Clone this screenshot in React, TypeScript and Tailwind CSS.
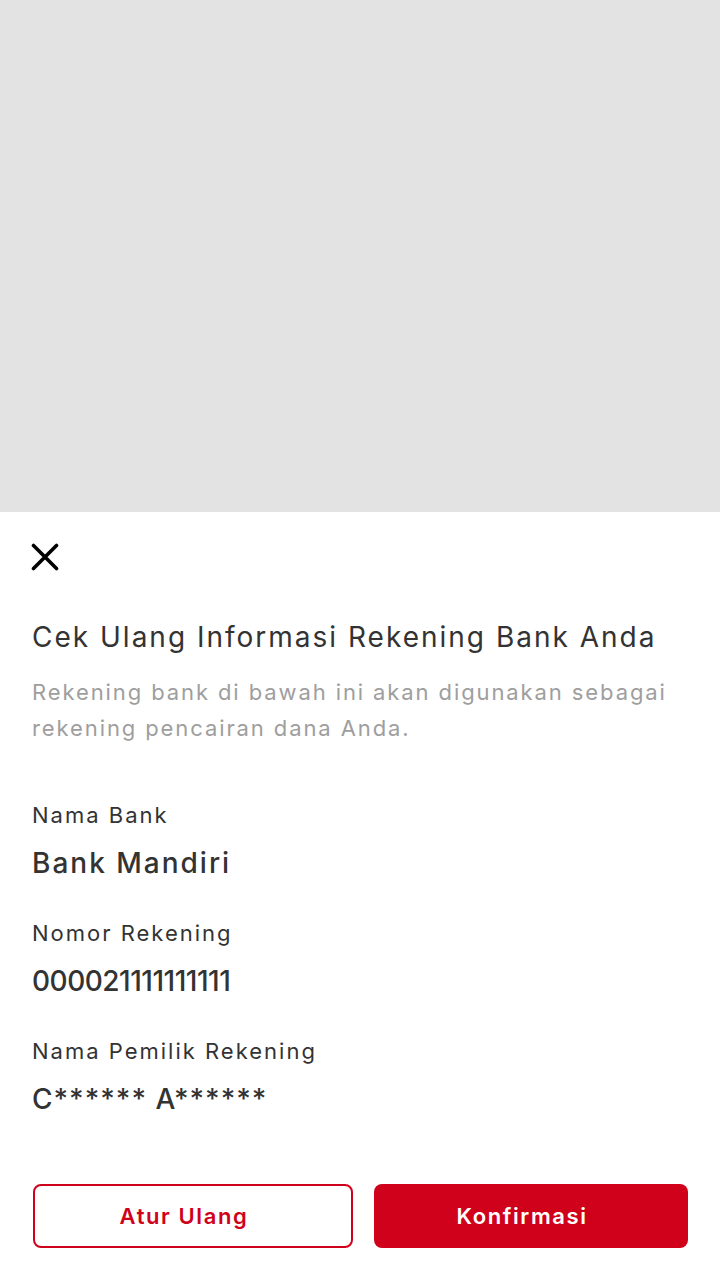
import React from 'react';

const rows = [
  { label: 'Nama Bank', value: 'Bank Mandiri', track: 'tracking-[2px]' },
  { label: 'Nomor Rekening', value: '000021111111111', track: 'tracking-[-0.5px]' },
  { label: 'Nama Pemilik Rekening', value: 'C****** A******', track: 'tracking-[1px]' },
];

function CloseIcon() {
  return (
    <svg width="28" height="28" viewBox="0 0 28 28" fill="none">
      <path d="M2.5 2.5L25.5 25.5M25.5 2.5L2.5 25.5" stroke="#000" strokeWidth="3.6" strokeLinecap="round" />
    </svg>
  );
}

export default function App() {
  return (
    <div className="flex h-[1280px] flex-col bg-white font-['Inter',sans-serif] text-[#333333]">
      {/* dimmed page behind the sheet */}
      <div className="h-[512px] bg-[#e3e3e3]" />

      {/* bottom sheet */}
      <div className="flex flex-1 flex-col bg-white pl-[32px] pr-[32px]">
        <button className="mt-[31px] ml-[-1px] h-[28px] w-[28px]">
          <CloseIcon />
        </button>

        <h2 className="mt-[48px] text-[28px] leading-[36px] font-normal tracking-[2px] text-[#333333]">
          Cek Ulang Informasi Rekening Bank Anda
        </h2>
        <p className="mt-[19px] text-[22px] leading-[36px] tracking-[1.9px] text-[#9e9e9e]">
          Rekening bank di bawah ini akan digunakan sebagai rekening pencairan dana Anda.
        </p>

        <div className="mt-[53px] flex flex-col gap-[36px]">
          {rows.map((r) => (
            <div key={r.label} className="flex flex-col">
              <span className="text-[22px] leading-[32px] tracking-[2px] text-[#333333]">{r.label}</span>
              <span className={`mt-[14px] text-[28px] leading-[36px] font-medium text-[#333333] ${r.track}`}>{r.value}</span>
            </div>
          ))}
        </div>

        <div className="mt-auto mb-[32px] flex gap-[21px] pl-[1px]">
          <button className="flex h-[64px] w-[320px] items-center justify-center rounded-[8px] border-2 border-[#d0021b] bg-white pr-[18px] text-[22px] font-semibold tracking-[1.6px] text-[#d0021b]">
            Atur Ulang
          </button>
          <button className="flex h-[64px] w-[314px] items-center justify-center rounded-[8px] bg-[#d0021b] pr-[18px] text-[22px] font-semibold tracking-[1.6px] text-white">
            Konfirmasi
          </button>
        </div>
      </div>
    </div>
  );
}
